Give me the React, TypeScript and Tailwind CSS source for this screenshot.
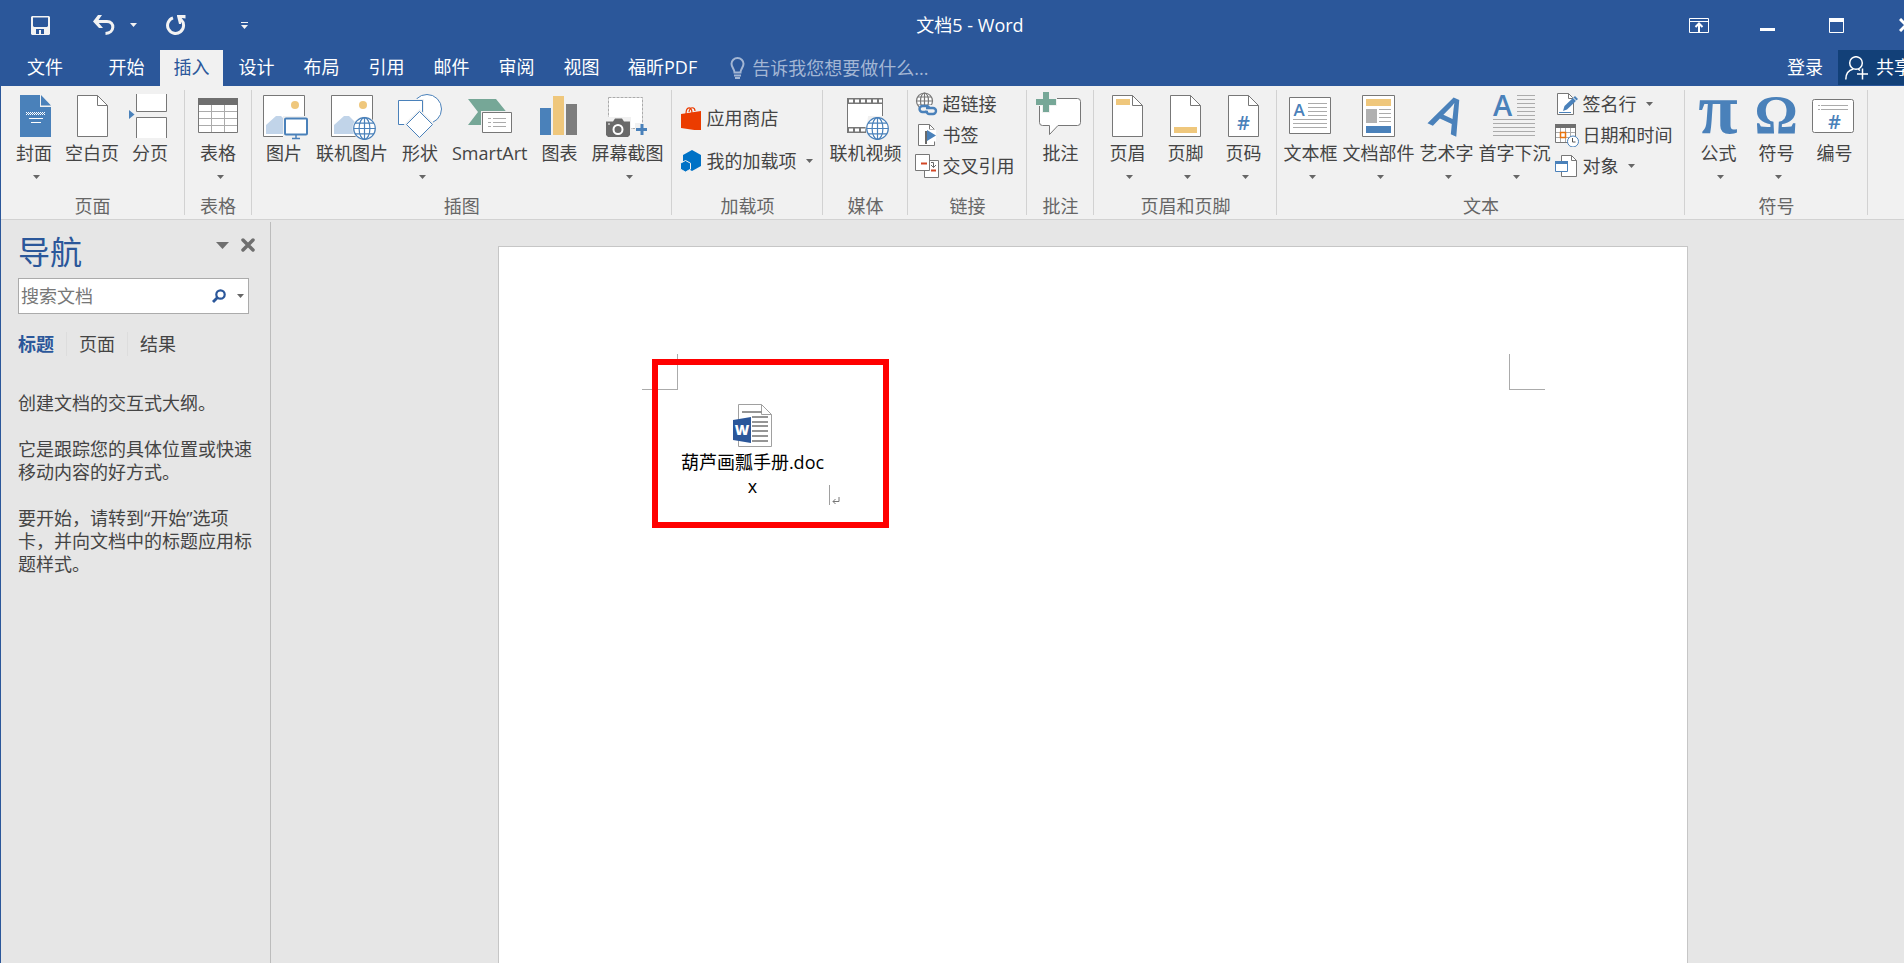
import type { ReactNode } from "react";

const BLUE = "#4a81ba";
const GRAY = "#777777";
const GOLD = "#efc77c";

function Caret({ className = "text-[#666666]" }: { className?: string }) {
  return (
    <svg width="7" height="4" viewBox="0 0 7 4" className={`shrink-0 ${className}`} aria-hidden="true">
      <path d="M0 0h7L3.5 4z" fill="currentColor" />
    </svg>
  );
}

function Big({ children }: { children: ReactNode }) {
  return (
    <svg width="48" height="48" viewBox="0 0 48 48" fill="none" className="shrink-0 overflow-visible" aria-hidden="true">
      {children}
    </svg>
  );
}

function Small({ children }: { children: ReactNode }) {
  return (
    <svg width="24" height="24" viewBox="0 0 24 24" fill="none" className="shrink-0" aria-hidden="true">
      {children}
    </svg>
  );
}

function Globe({ cx, cy, r, color = BLUE }: { cx: number; cy: number; r: number; color?: string }) {
  const k = r * 0.5;
  const h = r * 0.86;
  return (
    <g stroke={color} strokeWidth="1.2">
      <circle cx={cx} cy={cy} r={r + 1.2} fill="#f1f1f1" stroke="none" />
      <circle cx={cx} cy={cy} r={r} fill="#fff" />
      <ellipse cx={cx} cy={cy} rx={k} ry={r} />
      <path d={`M${cx} ${cy - r}v${2 * r}M${cx - r} ${cy}h${2 * r}M${cx - h} ${cy - k}h${2 * h}M${cx - h} ${cy + k}h${2 * h}`} />
    </g>
  );
}

function Sheet({ children }: { children?: ReactNode }) {
  return (
    <Big>
      <path d="M9.5 3.500h20l10 10v31h-30z" fill="#fff" stroke={GRAY} />
      <path d="M29.500 3.500v10h10" stroke={GRAY} />
      {children}
    </Big>
  );
}

const CoverIcon = () => (
  <Big>
    <path d="M10 3h20v12h11v30H10z" fill={BLUE} />
    <path d="M31 3l10 10.500H31z" fill={BLUE} />
    <path d="M16 20.500h19M16 22.500h19" stroke="#fff" strokeDasharray="1 1" />
    <path d="M17 21.500h18" stroke="#fff" strokeDasharray="1 1" />
    <path d="M19 26.500h14M21 30.500h10" stroke="#fff" />
  </Big>
);

const BreakIcon = () => (
  <Big>
    <path d="M10.500 2v17.500h30V2" fill="#fff" stroke={GRAY} />
    <path d="M10.500 46V25.500h30V46" fill="#fff" stroke={GRAY} />
    <path d="M3 18l5.500 4.500L3 27z" fill={BLUE} />
  </Big>
);

const TableIcon = () => (
  <Big>
    <path d="M4.500 6.500h39v34h-39z" fill="#fff" stroke={GRAY} />
    <path d="M4 6h40v7H4z" fill="#6f6f6f" />
    <path d="M17.500 13v27M30.500 13v27M5 19.500h38M5 26.500h38M5 33.500h38" stroke="#ababab" />
  </Big>
);

const Photo = () => (
  <g>
    <path d="M3.500 3.500h41v41h-41z" fill="#fff" stroke={GRAY} />
    <circle cx="35" cy="13" r="4" fill={GOLD} />
    <path d="M6 42v-9l10-9h5l9 9v9z" fill="#c1d4e9" />
  </g>
);

const PictureIcon = () => (
  <Big>
    <Photo />
    <path d="M23 24h25v24H23z" fill="#f1f1f1" />
    <rect x="25" y="26.500" width="22" height="16" rx="1" fill="#fff" stroke={BLUE} strokeWidth="2" />
    <path d="M36 43v3.500M32 46.500h8" stroke={BLUE} strokeWidth="1.500" />
  </Big>
);

const OnlinePictureIcon = () => (
  <Big>
    <Photo />
    <Globe cx={36.5} cy={36.5} r={10.8} />
  </Big>
);

const ShapesIcon = () => (
  <Big>
    <circle cx="31" cy="17" r="14.500" fill="#fff" stroke={BLUE} />
    <path d="M2.500 8.500h24v24h-24z" fill="#fff" stroke="#f1f1f1" strokeWidth="3" />
    <path d="M2.500 8.500h24v24h-24z" fill="#fff" stroke={BLUE} />
    <path d="M23.500 19L37 32.500 23.500 46 10 32.500z" fill="#fff" stroke="#f1f1f1" strokeWidth="3" />
    <path d="M23.500 19.500l13 13-13 13-13-13z" fill="#fff" stroke={BLUE} />
  </Big>
);

const SmartArtIcon = () => (
  <Big>
    <path d="M2 7h28l10.500 13L30 33H2l10-13z" fill="#76a797" />
    <path d="M15 19h33v23H15z" fill="#f1f1f1" />
    <path d="M16.500 20.500h29v20h-29z" fill="#fff" stroke={GRAY} />
    <path d="M22 26.500h3M22 30.500h3M22 34.500h3M27 26.500h13M27 30.500h13M27 34.500h13" stroke="#ababab" />
  </Big>
);

const ChartIcon = () => (
  <Big>
    <path d="M5 16h11v27H5z" fill={BLUE} />
    <path d="M18 4h11v39H18z" fill={GOLD} />
    <path d="M31 12h11v31H31z" fill="#7d7d7d" />
  </Big>
);

const ScreenshotIcon = () => (
  <Big>
    <path d="M5.500 5.500h34v31h-34z" fill="#fff" stroke="#ababab" strokeDasharray="3 1" />
    <path d="M2 25h26v21H2z" fill="#f1f1f1" />
    <path d="M32 31h16v13H32z" fill="#f1f1f1" />
    <path d="M3 29.500h7l2-3h7l2 3h6V43l-2 2H5l-2-2z" fill="#6a6a6a" />
    <circle cx="15" cy="37.500" r="4.500" stroke="#fff" strokeWidth="2" />
    <path d="M5 32h2" stroke="#fff" />
    <path d="M39 32v11M33 37.500h11" stroke={BLUE} strokeWidth="3" />
  </Big>
);

const VideoIcon = () => (
  <Big>
    <path d="M6.500 6.500h35v34h-35z" fill="#fff" stroke={GRAY} />
    <path d="M6 6h36v6H6zM6 35h20v6H6z" fill={GRAY} />
    <path d="M8 7.500h4v3H8zM14 7.500h4v3h-4zM20 7.500h4v3h-4zM26 7.500h4v3h-4zM32 7.500h4v3h-4zM38 7.500h3v3h-3zM8 36.500h4v3H8zM14 36.500h4v3h-4zM20 36.500h4v3h-4z" fill="#fff" />
    <path d="M27 24h15v18H25z" fill="#f1f1f1" />
    <path d="M26 12h15v10H26z" fill="#fff" />
    <Globe cx={36.5} cy={36.5} r={10.8} />
  </Big>
);

const CommentIcon = () => (
  <Big>
    <path d="M6.500 6.500h35a3 3 0 0 1 3 3v21a3 3 0 0 1-3 3H22l-8.500 9v-9h-7a3 3 0 0 1-3-3v-21a3 3 0 0 1 3-3z" fill="#fff" stroke={GRAY} />
    <path d="M6-1h8v7h7v8h-7v7H6v-7H-1V6h7z" fill="#f1f1f1" />
    <path d="M7 0h6v7h7v6h-7v7H7v-7H0V7h7z" fill="#76a797" />
  </Big>
);

const TextBoxIcon = () => (
  <Big>
    <path d="M3.500 5.500h41v36h-41z" fill="#fff" stroke={GRAY} />
    <text x="13" y="24" fontSize="17" fontWeight="600" textAnchor="middle" fill={BLUE}>A</text>
    <path d="M22 11.500h19M22 15.500h19M22 19.500h19M22 23.500h19M7 27.500h34M7 31.500h34M7 35.500h34" stroke="#ababab" />
  </Big>
);

const PartsIcon = () => (
  <Big>
    <path d="M8.500 3.500h32v41h-32z" fill="#fff" stroke={GRAY} />
    <path d="M12 7h25v7H12z" fill={GOLD} />
    <path d="M12 17h11v14H12z" fill="#b1b1b1" />
    <path d="M25 17.500h12M25 21.500h12M25 25.500h12M25 29.500h12" stroke="#ababab" />
    <path d="M12 34h25v7H12z" fill={BLUE} />
  </Big>
);

const WordArtIcon = () => (
  <Big>
    <text x="20" y="38" fontSize="48" fontWeight="600" textAnchor="middle" fill={BLUE} transform="rotate(25 20 38)">A</text>
  </Big>
);

const DropCapIcon = () => (
  <Big>
    <text x="12.500" y="24" fontSize="29" fontWeight="600" textAnchor="middle" fill={BLUE}>A</text>
    <path d="M27 3.500h18M27 7.500h18M27 11.500h18M27 15.500h18M27 19.500h18M27 23.500h18M3 27.500h42M3 31.500h42M3 35.500h42M3 39.500h42M3 43.500h42" stroke="#ababab" />
  </Big>
);

const EquationIcon = () => (
  <Big>
    <text x="24" y="41" fontSize="72" fontWeight="700" textAnchor="middle" fill={BLUE} className="font-['Liberation_Serif',serif]">π</text>
  </Big>
);

const SymbolIcon = () => (
  <Big>
    <text x="24" y="41" fontSize="54" fontWeight="700" textAnchor="middle" fill={BLUE} className="font-['Liberation_Serif',serif]">Ω</text>
  </Big>
);

const NumberIcon = () => (
  <Big>
    <rect x="2.500" y="7.500" width="41" height="33" rx="2" fill="#fff" stroke={GRAY} />
    <path d="M8 13.500h2M11 13.500h27M8 17.500h2M11 17.500h27" stroke="#ababab" />
    <text x="24.500" y="37" fontSize="20" fontWeight="600" textAnchor="middle" fill={BLUE}>#</text>
  </Big>
);

const LinkIcon = () => (
  <Small>
    <Globe cx={9.5} cy={9} r={8} color={GRAY} />
    <path d="M4 13h20v11H4z" fill="#f1f1f1" />
    <path d="M14 20.500h-5.500a3 3 0 0 1 0-6h4a3 3 0 0 1 3 3M12 16.500h7a3 3 0 0 1 0 6h-4a3 3 0 0 1-2.500-3.500" stroke={BLUE} strokeWidth="2.400" transform="translate(-1 -.5)" />
  </Small>
);

const BookmarkIcon = () => (
  <Small>
    <path d="M3.500 1.500h11l5 5v16h-16z" fill="#fff" stroke={GRAY} />
    <path d="M14.500 1.500v5h5" stroke={GRAY} />
    <path d="M12 6.500h9v12h-9z" fill="#fff" />
    <path d="M11 8v13" stroke="#6a6a6a" strokeWidth="2" />
    <path d="M12 7l9 5.500-9 5.500z" fill={BLUE} />
  </Small>
);

const CrossRefIcon = () => (
  <Small>
    <path d="M9.500 6.500h14v17h-14z" fill="#fff" stroke={GRAY} />
    <path d="M.5.5h14v16H.5z" fill="#fff" stroke={GRAY} />
    <path d="M6 9.500h6M16 16.500h5" stroke="#d24726" strokeWidth="2" />
    <path d="M16 8.500h2.500v5M16 11l2.500 2.500L21 11" stroke="#6a6a6a" />
  </Small>
);

const SignatureIcon = () => (
  <Small>
    <path d="M2.500 1.500h11l5 5v16h-16z" fill="#fff" stroke={GRAY} />
    <path d="M13.500 1.500v5h5" stroke={GRAY} />
    <path d="M4 20.500h12" stroke={BLUE} />
    <path d="M8 19l1.500-5L20 4l3 3-11 10.500z" fill={BLUE} />
    <path d="M18 5.500l3.500 3.500" stroke="#fff" />
  </Small>
);

const DateIcon = () => (
  <Small>
    <path d="M.5 2.500h20v17H.5z" fill="#fff" stroke={GRAY} />
    <path d="M0 1h21v4H0z" fill="#6f6f6f" />
    <path d="M5.500 5v14M10.500 5v14M15.500 5v14M1 9.500h19M1 14.500h19" stroke="#ababab" />
    <path d="M5.500 9.500h5v5h-5z" fill="#fff" stroke="#e8730c" strokeWidth="1.500" />
    <circle cx="18" cy="18.500" r="5.500" fill="#fff" stroke={BLUE} />
    <path d="M17.500 15v4h3" stroke="#555" />
  </Small>
);

const ObjectIcon = () => (
  <Small>
    <path d="M6.500 1.500h10l5 5v16h-15z" fill="#fff" stroke={GRAY} />
    <path d="M16.500 1.500v5h5" stroke={GRAY} />
    <path d="M.5 8.500h12v9H.5z" fill="#fff" stroke={BLUE} />
    <path d="M0 7h13v3H0z" fill={BLUE} />
  </Small>
);

const StoreIcon = () => (
  <Small>
    <path d="M7 8c0-8 6-8 6-1M10 6c1-6 6-5 6-1" stroke="#eb3c00" strokeWidth="1.200" />
    <path d="M2 8l20-3v20L2 22z" fill="#eb3c00" />
  </Small>
);

const AddinsIcon = () => (
  <Small>
    <path d="M13 1l9 5v11l-9 5-9-5V6z" fill="#0072c6" />
    <path d="M6.500 11.500l5 2.700v6l-5 2.800-5-2.800v-6z" fill="#0072c6" stroke="#f1f1f1" />
  </Small>
);

function BigButton({ icon, label, caret = false }: { icon: ReactNode; label: string; caret?: boolean }) {
  return (
    <button type="button" className="flex flex-col items-center">
      <span className="flex w-0 justify-center">{icon}</span>
      <span className="mt-px whitespace-nowrap leading-6">{label}</span>
      {caret && <Caret className="mt-[10px] ml-[5px] text-[#666666]" />}
    </button>
  );
}

function RowButton({ icon, label, caret = false }: { icon: ReactNode; label: string; caret?: boolean }) {
  return (
    <button type="button" className="flex items-center whitespace-nowrap leading-6">
      {icon}
      <span className="ml-[3px]">{label}</span>
      {caret && <Caret className="ml-[10px] text-[#666666]" />}
    </button>
  );
}

function Group({ title, className, children }: { title: string; className: string; children: ReactNode }) {
  return (
    <section aria-label={title} className="mt-1 flex h-[125px] shrink-0 flex-col border-r border-[#d2d2d2]">
      <div className={`flex h-[107px] items-start pt-[2px] ${className}`}>{children}</div>
      <h2 className="text-center leading-[18px] text-[#666666]">{title}</h2>
    </section>
  );
}

const tabs = ["开始", "插入", "设计", "布局", "引用", "邮件", "审阅", "视图", "福昕PDF"];

function TitleBar() {
  return (
    <div className="relative flex h-[50px] items-center justify-between">
      <div className="flex h-5 items-center text-[#f3f3f3]">
        <button type="button" aria-label="保存" className="ml-[31px]">
          <svg width="19" height="19" viewBox="0 0 19 19" aria-hidden="true">
            <path fillRule="evenodd" fill="currentColor" d="M1 0h17l1 1v17l-1 1H1l-1-1V1zM2 1.500V10l1 1h13l1-1V1.500zM5 13v5h3v-4h2v4h3v-5z" />
          </svg>
        </button>
        <button type="button" aria-label="撤消" className="ml-[43px]">
          <svg width="22" height="20" viewBox="0 0 22 20" fill="none" aria-hidden="true">
            <path d="M3 6.500h11c8 0 8 11.500-1.500 12" stroke="currentColor" strokeWidth="3" />
            <path d="M9 0H5L0 6.500 6 13h4L4.500 6.500z" fill="currentColor" />
          </svg>
        </button>
        <button type="button" aria-label="撤消选项" className="ml-[15px]">
          <Caret className="text-[#f3f3f3]" />
        </button>
        <button type="button" aria-label="重复" className="ml-[29px]">
          <svg width="20" height="20" viewBox="0 0 20 20" fill="none" aria-hidden="true">
            <path d="M7 2.800A8 8 0 1 0 15 4.500" stroke="currentColor" strokeWidth="3" />
            <path d="M11 0h8.500v3.500L16 3l-1 6h-2L11 1z" fill="currentColor" />
          </svg>
        </button>
        <button type="button" aria-label="自定义快速访问工具栏" className="ml-[55px]">
          <svg width="7" height="7" viewBox="0 0 7 7" aria-hidden="true">
            <path d="M0 0h7v1H0zM0 3h7L3.500 7z" fill="currentColor" />
          </svg>
        </button>
      </div>
      <h1 className="pointer-events-none absolute inset-x-0 text-center">文档5 - Word</h1>
      <div className="flex h-full items-center *:flex *:h-full *:w-[69px] *:items-center *:justify-center">
        <button type="button" aria-label="功能区显示选项">
          <svg width="20" height="15" viewBox="0 0 20 15" fill="none" stroke="#fff" aria-hidden="true">
            <path d="M.5.500h19v14H.5zM1 3.500h18" />
            <path d="M10 14V6M6.500 9L10 5.500 13.500 9" strokeWidth="2" />
          </svg>
        </button>
        <button type="button" aria-label="最小化">
          <svg width="15" height="11" viewBox="0 0 15 11" aria-hidden="true"><path d="M0 8h15v3H0z" fill="#fff" /></svg>
        </button>
        <button type="button" aria-label="最大化">
          <svg width="15" height="15" viewBox="0 0 15 15" fill="none" aria-hidden="true">
            <path d="M.5.500h14v14H.5z" stroke="#fff" /><path d="M0 0h15v4H0z" fill="#fff" />
          </svg>
        </button>
        <button type="button" aria-label="关闭">
          <svg width="14" height="14" viewBox="0 0 14 14" fill="none" aria-hidden="true">
            <path d="M1 1l12 12M13 1L1 13" stroke="#fff" strokeWidth="3" />
          </svg>
        </button>
      </div>
    </div>
  );
}

function TabBar() {
  return (
    <nav className="flex h-9 items-stretch">
      <button type="button" className="mr-[5px] w-[90px] pb-[2px]">文件</button>
      <div className="flex gap-[2px]">
        {tabs.map((t) => (
          <button
            key={t}
            type="button"
            className={
              t === "插入"
                ? "min-w-[63px] bg-[#f1f1f1] px-[13px] pb-[2px] text-[#2b579a]"
                : "min-w-[63px] px-[13px] pb-[2px]"
            }
          >
            {t}
          </button>
        ))}
      </div>
      <label className="ml-[20px] flex items-center gap-[7px] text-[#a3b6d4]">
        <svg width="15" height="22" viewBox="0 0 15 22" fill="none" stroke="currentColor" aria-hidden="true">
          <path d="M4.500 15.500c0-3.500-3-5-3-8.700a6 5.800 0 0 1 12 0c0 3.700-3 5.200-3 8.700z" strokeWidth="2" />
          <path d="M4 18.500h7M5 21h5" strokeWidth="2" />
        </svg>
        <input aria-label="告诉我您想要做什么" placeholder="告诉我您想要做什么..." className="w-[190px] bg-transparent outline-none placeholder:text-[#a3b6d4]" />
      </label>
      <div className="ml-auto flex">
        <button type="button" className="px-[15px] pb-[2px]">登录</button>
        <button type="button" className="mb-px flex w-[102px] items-center gap-[8px] bg-[#124078] pl-[7px]">
          <svg width="23" height="24" viewBox="0 0 23 24" fill="none" stroke="#fff" strokeWidth="1.500" aria-hidden="true">
            <circle cx="11" cy="7" r="6.300" />
            <path d="M.8 23.500c0-6 3-9.500 7.500-10.500M17.500 12.500v11M12 18h11M13 13l2 1.500" />
          </svg>
          <span className="pb-[2px]">共享</span>
        </button>
      </div>
    </nav>
  );
}

function Ribbon() {
  return (
    <div className="flex h-[134px] shrink-0 border-b border-[#d2d2d2] bg-[#f1f1f1] text-[#444444]">
      <Group title="页面" className="gap-[13px] pr-[16px] pl-[15px]">
        <BigButton icon={<CoverIcon />} label="封面" caret />
        <BigButton icon={<Sheet />} label="空白页" />
        <BigButton icon={<BreakIcon />} label="分页" />
      </Group>
      <Group title="表格" className="px-[15px]">
        <BigButton icon={<TableIcon />} label="表格" caret />
      </Group>
      <Group title="插图" className="gap-[14px] pr-[8px] pl-[14px]">
        <BigButton icon={<PictureIcon />} label="图片" />
        <BigButton icon={<OnlinePictureIcon />} label="联机图片" />
        <BigButton icon={<ShapesIcon />} label="形状" caret />
        <BigButton icon={<SmartArtIcon />} label="SmartArt" />
        <BigButton icon={<ChartIcon />} label="图表" />
        <BigButton icon={<ScreenshotIcon />} label="屏幕截图" caret />
      </Group>
      <Group title="加载项" className="pr-[9px] pl-[7px]">
        <div className="flex flex-col gap-[19px] pt-[14px]">
          <RowButton icon={<StoreIcon />} label="应用商店" />
          <RowButton icon={<AddinsIcon />} label="我的加载项" caret />
        </div>
      </Group>
      <Group title="媒体" className="px-[6px]">
        <BigButton icon={<VideoIcon />} label="联机视频" />
      </Group>
      <Group title="链接" className="pr-[12px] pl-[7px]">
        <div className="flex flex-col gap-[7px]">
          <RowButton icon={<LinkIcon />} label="超链接" />
          <RowButton icon={<BookmarkIcon />} label="书签" />
          <RowButton icon={<CrossRefIcon />} label="交叉引用" />
        </div>
      </Group>
      <Group title="批注" className="px-[15px]">
        <BigButton icon={<CommentIcon />} label="批注" />
      </Group>
      <Group title="页眉和页脚" className="gap-[22px] px-[15px]">
        <BigButton icon={<Sheet><path d="M13 7h14v6H13z" fill={GOLD} /></Sheet>} label="页眉" caret />
        <BigButton icon={<Sheet><path d="M13 35h23v6H13z" fill={GOLD} /></Sheet>} label="页脚" caret />
        <BigButton
          icon={<Sheet><text x="24.500" y="38" fontSize="20" fontWeight="600" textAnchor="middle" fill={BLUE}>#</text></Sheet>}
          label="页码"
          caret
        />
      </Group>
      <Group title="文本" className="gap-[5px] pr-[12px] pl-[6px]">
        <BigButton icon={<TextBoxIcon />} label="文本框" caret />
        <BigButton icon={<PartsIcon />} label="文档部件" caret />
        <BigButton icon={<WordArtIcon />} label="艺术字" caret />
        <BigButton icon={<DropCapIcon />} label="首字下沉" caret />
        <div className="flex flex-col gap-[7px]">
          <RowButton icon={<SignatureIcon />} label="签名行" caret />
          <RowButton icon={<DateIcon />} label="日期和时间" />
          <RowButton icon={<ObjectIcon />} label="对象" caret />
        </div>
      </Group>
      <Group title="符号" className="gap-[22px] px-[15px]">
        <BigButton icon={<EquationIcon />} label="公式" caret />
        <BigButton icon={<SymbolIcon />} label="符号" caret />
        <BigButton icon={<NumberIcon />} label="编号" />
      </Group>
    </div>
  );
}

function NavigationPane() {
  return (
    <aside className="mt-[2px] w-[270px] shrink-0 border-r border-[#bcbcbc] pl-[17px] text-[#444444]">
      <div className="flex h-[56px] items-start pr-[15px]">
        <h2 className="mr-auto pt-[8px] text-[32px] leading-[44px] text-[#2b579a]">导航</h2>
        <button type="button" aria-label="任务窗格选项" className="mt-[20px]">
          <svg width="13" height="7" viewBox="0 0 13 7" aria-hidden="true"><path d="M0 0h13L6.500 7z" fill="#6f6f6f" /></svg>
        </button>
        <button type="button" aria-label="关闭窗格" className="mt-[16px] ml-[12px]">
          <svg width="14" height="14" viewBox="0 0 14 14" fill="none" aria-hidden="true">
            <path d="M2 2l10 10M12 2L2 12" stroke="#6f6f6f" strokeWidth="3.500" strokeLinecap="round" />
          </svg>
        </button>
      </div>
      <form className="mr-[21px] flex h-9 items-center border border-[#ababab] bg-white pr-[4px] pl-[2px]">
        <input aria-label="搜索文档" placeholder="搜索文档" className="w-0 grow outline-none placeholder:text-[#777777]" />
        <button type="button" aria-label="搜索">
          <svg width="14" height="14" viewBox="0 0 14 14" fill="none" stroke="#2b579a" aria-hidden="true">
            <circle cx="8.500" cy="5.500" r="4.200" strokeWidth="2.200" />
            <path d="M5.500 8.500L1 13" strokeWidth="2.800" />
          </svg>
        </button>
        <button type="button" aria-label="搜索选项" className="ml-[11px]"><Caret /></button>
      </form>
      <div className="mt-[17px] flex h-[26px] items-center">
        <button type="button" className="pr-[12px] font-bold text-[#2b579a]">标题</button>
        <button type="button" className="border-l border-[#dddddd] px-[12px]">页面</button>
        <button type="button" className="border-l border-[#dddddd] px-[12px]">结果</button>
      </div>
      <div className="mt-[35px] mr-[14px] flex flex-col gap-[23px] leading-[23px]">
        <p>创建文档的交互式大纲。</p>
        <p>它是跟踪您的具体位置或快速移动内容的好方式。</p>
        <p>要开始，请转到“开始”选项卡，并向文档中的标题应用标题样式。</p>
      </div>
    </aside>
  );
}

function DocumentArea() {
  return (
    <main className="flex grow justify-center pt-[26px] pl-[10px]">
      <article className="relative w-[1190px] border border-b-0 border-[#c6c6c6] bg-white pt-[107px] pr-[142px] pl-[143px]">
        <div className="flex justify-between">
          <span className="size-9 border-r border-b border-[#ababab]" />
          <span className="size-9 border-b border-l border-[#ababab]" />
        </div>
        <div className="ml-[36px] flex items-end pt-[14px] text-black">
          <button type="button" className="flex w-[150px] flex-col items-center">
            <svg width="39" height="43" viewBox="0 0 39 43" fill="none" aria-hidden="true">
              <path d="M5.500.5h23l10 10v32h-33z" fill="#fff" stroke="#a0a0a0" />
              <path d="M28.500.5v10h10" stroke="#a0a0a0" />
              <path d="M9 8h20M19 13h16M19 18h16M19 22h16M19 27h16M19 32h16M19 37h16" stroke="#959595" strokeWidth="2" />
              <path d="M0 16l18-3v26L0 36z" fill="#2b579a" />
              <text x="9" y="31" fontSize="14" fontWeight="800" textAnchor="middle" fill="#fff">W</text>
            </svg>
            <span className="mt-[3px] w-[148px] break-all leading-6">葫芦画瓢手册.docx</span>
          </button>
          <span className="mb-[-7px] ml-px h-5 w-px bg-[#a0a0a0]" />
          <svg width="8" height="8" viewBox="0 0 8 8" fill="none" stroke="#777" className="mb-[-7px] ml-[2px]" aria-hidden="true">
            <path d="M7 0v4.500H1M3.500 2L1 4.500 3.500 7" />
          </svg>
        </div>
        <div className="pointer-events-none absolute top-[112px] left-[153px] h-[169px] w-[237px] border-6 border-[#ff0000]" />
      </article>
    </main>
  );
}

export default function App() {
  return (
    <div className="flex h-screen flex-col overflow-hidden bg-[#e6e6e6] font-['Open_Sans','Noto_Sans_CJK_SC',sans-serif] text-[18px] leading-6">
      <header className="-mr-9 shrink-0 bg-[#2b579a] text-white">
        <TitleBar />
        <TabBar />
      </header>
      <div className="flex grow flex-col border-l border-[#2b579a]">
        <Ribbon />
        <div className="flex grow">
          <NavigationPane />
          <DocumentArea />
        </div>
      </div>
    </div>
  );
}
